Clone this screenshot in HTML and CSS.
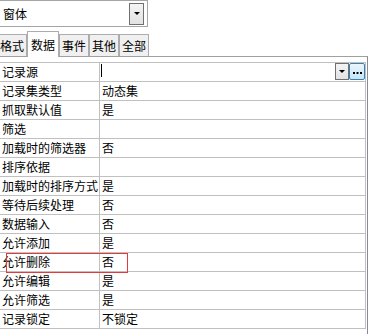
FILE: index.html
```html
<!DOCTYPE html>
<html lang="zh-CN">
<head>
    <meta charset="UTF-8">
    <title>属性表</title>
    <link rel="stylesheet" href="styles.css">
</head>
<body>
    <div class="combo">
        <span class="combo-text">窗体</span>
        <span class="drop-btn">
            <svg width="6" height="3" viewBox="0 0 6 3"><path d="M0 0h6L3 3z" fill="#000"/></svg>
        </span>
    </div>

    <div class="tabs">
        <div class="tab">格式</div>
        <div class="tab active">数据</div>
        <div class="tab">事件</div>
        <div class="tab">其他</div>
        <div class="tab">全部</div>
    </div>

    <div class="panel">
        <div class="sheet">
            <div class="cell label">记录源</div>
            <div class="cell value source">
                <span class="caret"></span>
                <span class="mini-btn">
                    <svg width="6" height="3" viewBox="0 0 6 3"><path d="M0 0h6L3 3z" fill="#000"/></svg>
                </span>
                <span class="dots-btn">
                    <svg width="9" height="2" viewBox="0 0 9 2"><rect x="0" y="0" width="2" height="2"/><rect x="3.5" y="0" width="2" height="2"/><rect x="7" y="0" width="2" height="2"/></svg>
                </span>
            </div>
            <div class="cell label">记录集类型</div><div class="cell value">动态集</div>
            <div class="cell label">抓取默认值</div><div class="cell value">是</div>
            <div class="cell label">筛选</div><div class="cell value"></div>
            <div class="cell label">加载时的筛选器</div><div class="cell value">否</div>
            <div class="cell label">排序依据</div><div class="cell value"></div>
            <div class="cell label">加载时的排序方式</div><div class="cell value">是</div>
            <div class="cell label">等待后续处理</div><div class="cell value">否</div>
            <div class="cell label">数据输入</div><div class="cell value">否</div>
            <div class="cell label">允许添加</div><div class="cell value">是</div>
            <div class="cell label">允许删除</div><div class="cell value">否</div>
            <div class="cell label">允许编辑</div><div class="cell value">是</div>
            <div class="cell label">允许筛选</div><div class="cell value">是</div>
            <div class="cell label">记录锁定</div><div class="cell value">不锁定</div>

            <div class="mark"></div>
        </div>
    </div>
</body>
</html>
```

FILE: styles.css
```css
* {
    box-sizing: border-box;
}
html, body {
    height: 100%;
}
body {
    margin: 0;
    overflow: hidden;
    font-family: "Noto Sans CJK SC", "Microsoft YaHei", sans-serif;
    font-size: 12px;
    color: #000;
    background-color: #fff;
}
.combo {
    display: flex;
    align-items: center;
    width: 148px;
    height: 27px;
    padding-left: 3px;
    padding-right: 3px;
    border: 1px solid #a5a5a5;
    border-left: none;
}
.drop-btn {
    display: flex;
    align-items: center;
    justify-content: center;
    margin-left: auto;
    width: 15px;
    height: 22px;
    border: 1px solid #707070;
    background: linear-gradient(#f4f4f4, #e2e2e2);
}
.tabs {
    display: flex;
    align-items: flex-end;
    height: 25px;
    margin-top: 4px;
    margin-left: -3px;
    position: relative;
    z-index: 1;
}
.tab {
    display: flex;
    align-items: center;
    height: 22px;
    padding: 0 2px;
    border: 1px solid #acacac;
    border-bottom: none;
    background-color: #f0f0f0;
    white-space: nowrap;
}
.tab.active {
    height: 26px;
    margin-bottom: -1px;
    padding: 0 3px 1px;
    background-color: #fff;
}
.panel {
    min-height: calc(100% - 56px);
    padding: 5px 1px 0 0;
    border-top: 1px solid #a0a0a0;
    border-right: 1px solid #888a94;
}
.sheet {
    position: relative;
    display: grid;
    grid-template-columns: 100px 1fr;
    grid-auto-rows: 19px;
    width: 366px;
    border-top: 1px solid #c0c0c0;
    border-right: 1px solid #c0c0c0;
}
.cell {
    line-height: 18px;
    border-bottom: 1px solid #c0c0c0;
    white-space: nowrap;
    overflow: hidden;
}
.label {
    padding-left: 2px;
    border-right: 1px solid #c0c0c0;
}
.value {
    padding-left: 2px;
}
.source {
    display: flex;
    align-items: flex-start;
    padding-left: 1px;
}
.caret {
    width: 1px;
    height: 13px;
    margin-top: 1px;
    background-color: #000;
}
.mini-btn {
    display: flex;
    align-items: center;
    justify-content: center;
    margin-left: auto;
    width: 14px;
    height: 17px;
    border: 1px solid #707070;
    background: linear-gradient(#f4f4f4, #e2e2e2);
}
.dots-btn {
    display: flex;
    align-items: center;
    justify-content: center;
    width: 16px;
    height: 17px;
    padding-top: 2px;
    border: 1px solid #3c7fb1;
    border-radius: 2px;
    background: linear-gradient(#eaf6fd, #c4e5f9);
}
.mark {
    position: absolute;
    left: 6px;
    top: 190px;
    width: 122px;
    height: 20px;
    border: 1px solid #e53a3a;
}
```
